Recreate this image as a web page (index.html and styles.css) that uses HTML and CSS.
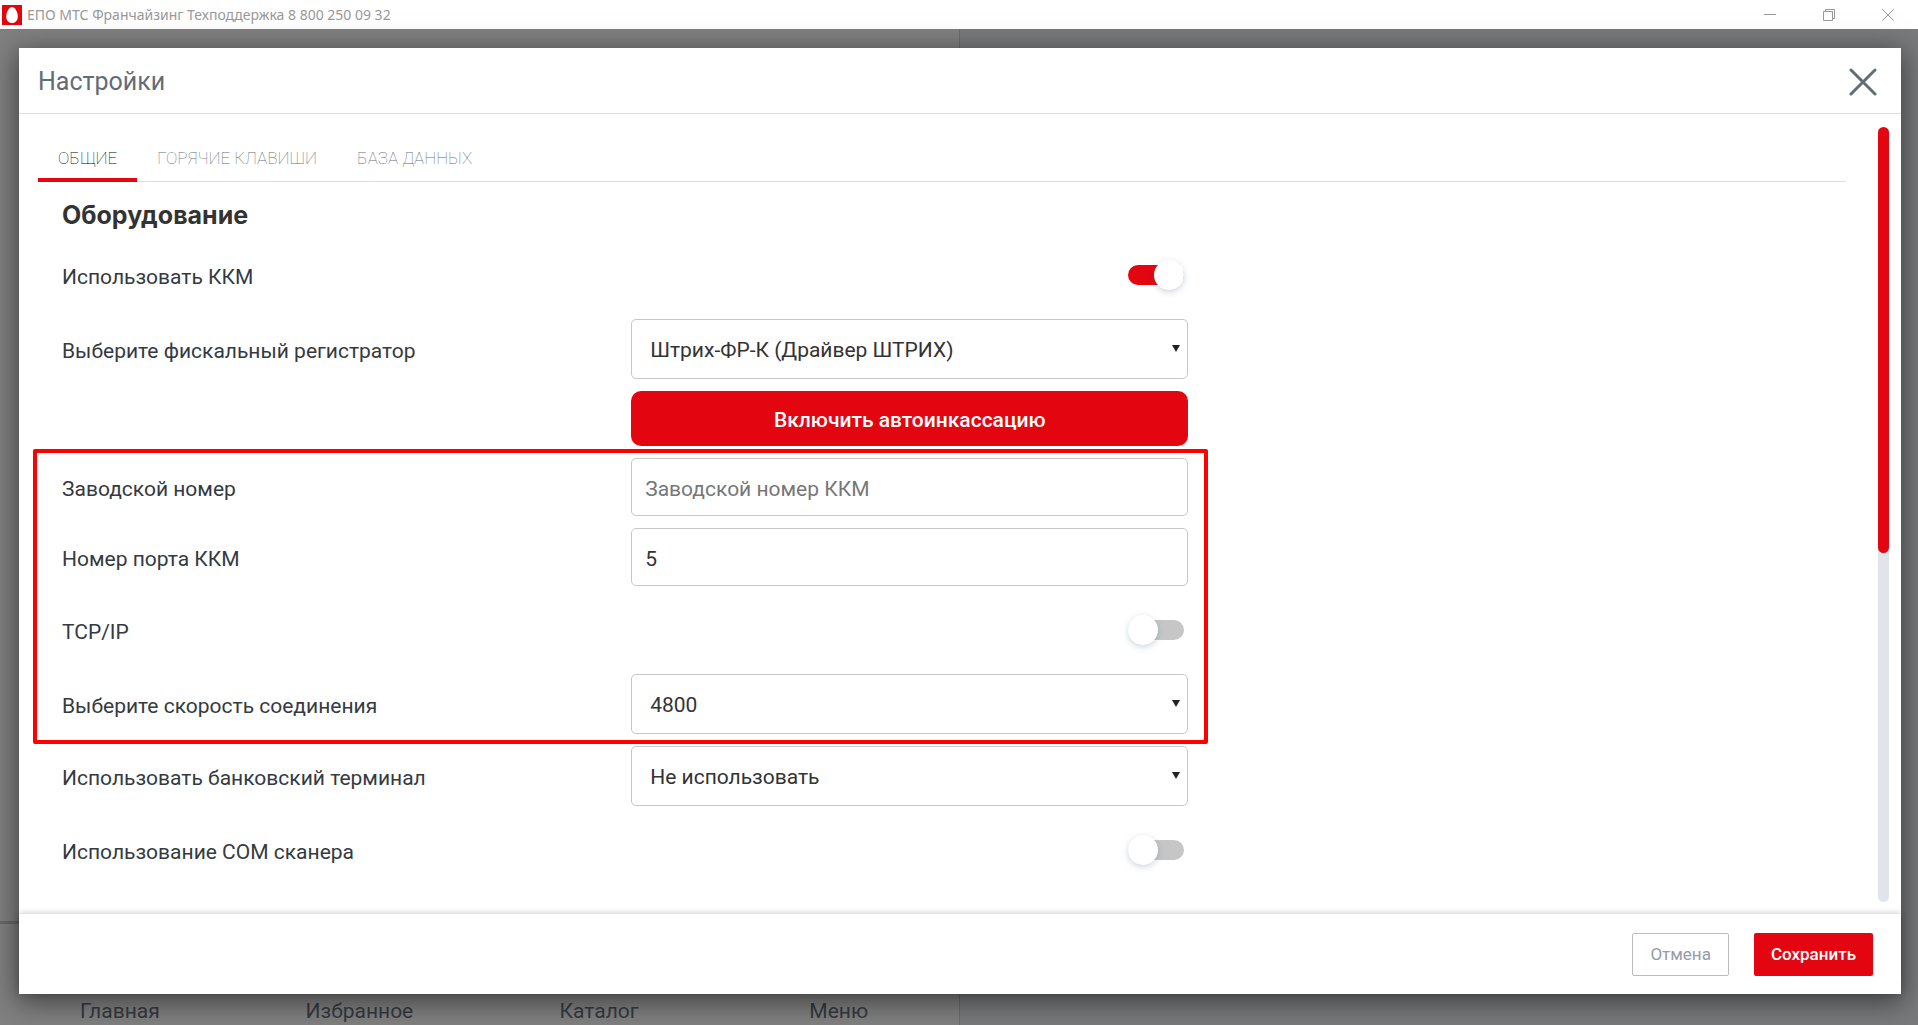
FILE: index.html
```html
<!DOCTYPE html>
<html lang="ru">
<head>
<meta charset="utf-8">
<title>ЕПО МТС Франчайзинг</title>
<link rel="stylesheet" href="styles.css">
</head>
<body>
<header class="titlebar">
  <svg class="app-icon" viewBox="0 0 20 20" aria-hidden="true"><rect width="20" height="20" fill="#e30611"/><path d="M10 2C13 2 15.800 7.200 15.800 11.500C15.800 15.400 13.400 18 10 18S4.200 15.400 4.200 11.500C4.200 7.200 7 2 10 2Z" fill="#fff"/></svg>
  <span class="app-title">ЕПО МТС Франчайзинг Техподдержка 8 800 250 09 32</span>
  <div class="window-controls">
    <button type="button" aria-label="Свернуть"><svg viewBox="0 0 12 12"><path d="M0 5.500H12"/></svg></button>
    <button type="button" aria-label="Восстановить"><svg viewBox="0 0 12 12"><path d="M.5 2.500H9.500V11.500H.5ZM2.500 2.500V.5H11.500V9.500H9.500"/></svg></button>
    <button type="button" aria-label="Закрыть окно"><svg viewBox="0 0 12 12"><path d="M.3 .3L11.700 11.700M11.700 .3L.3 11.700"/></svg></button>
  </div>
</header>
<div class="workspace">
  <div class="pane pane-left">
    <nav class="bottom-nav">
      <a href="#home">Главная</a>
      <a href="#favorites">Избранное</a>
      <a href="#catalog">Каталог</a>
      <a href="#menu">Меню</a>
    </nav>
  </div>
  <div class="pane pane-right"></div>

  <section class="modal" role="dialog" aria-labelledby="modal-title">
    <header class="modal-header">
      <h1 id="modal-title">Настройки</h1>
      <button type="button" class="close" aria-label="Закрыть"><svg viewBox="0 0 28 28"><path d="M2 2L26 26M26 2L2 26"/></svg></button>
    </header>
    <div class="modal-body">
      <div class="content">
        <nav class="tabs">
          <a class="tab tab-active" href="#general">ОБЩИЕ</a>
          <a class="tab" href="#hotkeys">ГОРЯЧИЕ КЛАВИШИ</a>
          <a class="tab" href="#database">БАЗА ДАННЫХ</a>
        </nav>
        <form class="settings" id="settings">
          <h2>Оборудование</h2>
          <div class="row row-toggle">
            <label for="use-kkm">Использовать ККМ</label>
            <input type="checkbox" class="toggle" id="use-kkm" checked>
          </div>
          <div class="row">
            <label for="registrar">Выберите фискальный регистратор</label>
            <div class="select"><select id="registrar"><option>Штрих-ФР-К (Драйвер ШТРИХ)</option></select></div>
          </div>
          <div class="row">
            <button type="button" class="btn-wide">Включить автоинкассацию</button>
          </div>
          <div class="group">
            <div class="row">
              <label for="serial">Заводской номер</label>
              <input type="text" class="field" id="serial" placeholder="Заводской номер ККМ">
            </div>
            <div class="row">
              <label for="port">Номер порта ККМ</label>
              <input type="text" class="field" id="port" value="5">
            </div>
            <div class="row row-toggle">
              <label for="tcp">TCP/IP</label>
              <input type="checkbox" class="toggle" id="tcp">
            </div>
            <div class="row">
              <label for="speed">Выберите скорость соединения</label>
              <div class="select"><select id="speed"><option>4800</option></select></div>
            </div>
          </div>
          <div class="row">
            <label for="terminal">Использовать банковский терминал</label>
            <div class="select"><select id="terminal"><option>Не использовать</option></select></div>
          </div>
          <div class="row row-toggle">
            <label for="scanner">Использование COM сканера</label>
            <input type="checkbox" class="toggle" id="scanner">
          </div>
        </form>
      </div>
      <div class="scrollbar"><div class="thumb"></div></div>
    </div>
    <footer class="modal-footer">
      <button type="button" class="btn btn-cancel">Отмена</button>
      <button type="submit" form="settings" class="btn btn-save">Сохранить</button>
    </footer>
  </section>
</div>
</body>
</html>
```
FILE: styles.css
```css
*, *::before, *::after { box-sizing: border-box; }

body {
  margin: 0;
  height: 100vh;
  display: flex;
  flex-direction: column;
  overflow: hidden;
  font-family: Roboto, "Liberation Sans", sans-serif;
  font-size: 21px;
  color: #343a40;
}

button, input, select { font: inherit; color: inherit; }
button { cursor: pointer; padding: 0; border: 0; background: none; }
a { color: inherit; text-decoration: none; }

/* Window title bar */
.titlebar {
  display: flex;
  align-items: center;
  height: 29px;
  padding: 0 1px 0 2px;
  background: #fff;
}
.app-icon { width: 20px; height: 20px; }
.app-title {
  margin-left: 5px;
  font: 14px/20px "Noto Sans", sans-serif;
  color: #999;
}
.window-controls { display: flex; margin-left: auto; }
.window-controls button { width: 59px; height: 28px; }
.window-controls svg {
  display: block;
  width: 12px;
  height: 12px;
  margin: 0 auto;
  fill: none;
  stroke: #999;
}

/* Dimmed application behind the dialog */
.workspace {
  position: relative;
  flex: 1;
  display: flex;
  min-height: 0;
}
.pane { flex: 1; }
.pane-left {
  display: flex;
  flex-direction: column;
  justify-content: flex-end;
  background: #808080;
  border-right: 1px solid #6b6c6d;
}
.pane-right { background: #787a7b; }
.bottom-nav {
  display: flex;
  height: 104px;
  padding-top: 74px;
  border-top: 3px solid #686868;
}
.bottom-nav a {
  flex: 1;
  text-align: center;
  line-height: 26px;
}

/* Dialog */
.modal {
  position: absolute;
  inset: 19px 17px 31px 19px;
  display: flex;
  flex-direction: column;
  background: #fff;
  box-shadow: 0 6px 26px 2px rgba(0, 0, 0, .5);
}
.modal-header {
  display: flex;
  align-items: center;
  justify-content: space-between;
  height: 66px;
  padding: 3px 24px 0 19px;
  border-bottom: 1px solid #dee0e1;
  color: #626c77;
}
.modal-header h1 { margin: 0; font-size: 25px; font-weight: 400; line-height: 30px; }
.close svg {
  display: block;
  width: 28px;
  height: 28px;
  fill: none;
  stroke: #626c77;
  stroke-width: 3;
  stroke-linecap: round;
}
.modal-body {
  flex: 1;
  display: flex;
  justify-content: space-between;
  min-height: 0;
  padding: 13px 12px 12px 19px;
}
.content { flex: 1; margin-right: 32px; }

.tabs { display: flex; border-bottom: 1px solid #dcdcdc; }
.tab {
  height: 55px;
  margin-bottom: -1px;
  padding: 19px 20px 0;
  border-bottom: 4px solid transparent;
  font-size: 17px;
  font-weight: 100;
  line-height: 24px;
  color: #626c77;
}
.tab-active { border-bottom-color: #e30611; color: #000; }

.settings {
  display: flex;
  flex-direction: column;
  gap: 12px;
  width: 62.3%;
  margin-left: 24px;
}
.settings h2 {
  margin: 0;
  padding: 18px 0 0;
  font: 700 25px/31px Inter, sans-serif;
  color: #333;
}
.group {
  position: relative;
  display: flex;
  flex-direction: column;
  gap: 12px;
}
.group::before {
  content: "";
  position: absolute;
  inset: -9px -20px -10px -29px;
  border: 4px solid #f00;
  border-radius: 2px;
  pointer-events: none;
}
.row {
  display: grid;
  grid-template-columns: 569fr 557fr;
  align-items: center;
}
.row > :last-child { grid-column: 2; }
.row-toggle { height: 64px; }
.row label { padding-top: 3px; line-height: 28px; }

.field, .select select {
  display: block;
  width: 100%;
  border: 1px solid #c8c8c8;
  border-radius: 5px;
  background: #fff;
  color: #333;
}
.field { height: 58px; padding: 3px 13px 0; }
.field::placeholder { color: #777; opacity: 1; }
.select { position: relative; }
.select select { height: 60px; padding: 2px 36px 0 18px; appearance: none; }
.select::after {
  content: "";
  position: absolute;
  top: 26px;
  right: 8px;
  border: 4px solid transparent;
  border-top: 7px solid #222;
  border-bottom: 0;
  pointer-events: none;
}

.btn-wide {
  height: 55px;
  padding-top: 2px;
  border-radius: 10px;
  background: #e30611;
  color: #fff;
  font-weight: 500;
}

.toggle {
  appearance: none;
  display: flex;
  align-items: center;
  justify-self: end;
  width: 56px;
  height: 20px;
  margin: 0 4px 0 0;
  border-radius: 10px;
  background: #c6c6c6;
}
.toggle::before {
  content: "";
  width: 30px;
  height: 30px;
  border-radius: 50%;
  background: #fff;
  box-shadow: 0 2px 6px rgba(60, 90, 110, .25);
}
.toggle:checked { background: #e30611; }
.toggle:checked::before { margin-left: auto; }

.scrollbar { width: 11px; border-radius: 6px; background: #e1e4eb; }
.thumb { height: 55%; border-radius: 6px; background: #e30611; }

.modal-footer {
  display: flex;
  align-items: center;
  justify-content: flex-end;
  gap: 25px;
  height: 80px;
  padding: 0 28px 0 19px;
  box-shadow: 0 -1px 6px rgba(0, 0, 0, .2);
}
.btn { height: 43px; padding: 0 17px; border-radius: 2px; font-size: 17px; }
.btn-cancel { border: 1px solid #b9bdc2; color: #949ca5; }
.btn-save { background: #e30611; color: #fff; font-weight: 500; }
```
